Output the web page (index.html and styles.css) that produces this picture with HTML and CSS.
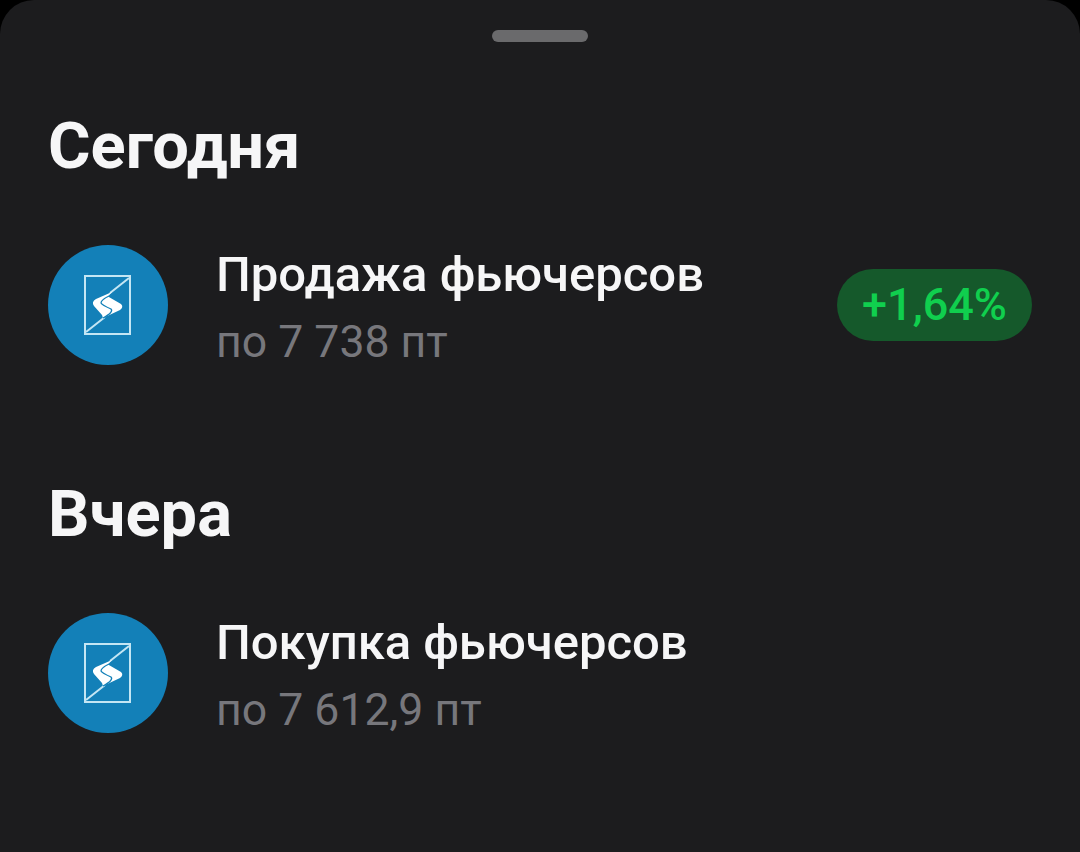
FILE: index.html
```html
<!DOCTYPE html>
<html lang="ru">
<head>
    <meta charset="UTF-8">
    <title>Операции</title>
    <link rel="stylesheet" href="styles.css">
</head>
<body>
    <div class="sheet">
        <div class="handle"></div>

        <section class="group group-today">
            <h2>Сегодня</h2>
            <div class="row">
                <svg class="logo" viewBox="0 0 120 120">
                    <circle cx="60" cy="60" r="60" fill="#1380b8"/>
                    <rect x="37" y="31" width="45" height="58" fill="none" stroke="#c4e6f4" stroke-width="2"/>
                    <path d="M38 87 L57 72 M62 48 L81 33" stroke="#c4e6f4" stroke-width="2"/>
                    <path d="M64 47 L48 54 Q43 57 46 61 L54 70 L55 73 L72 65 Q76 62 73 59 L60 51.5 Z" fill="#fff"/>
                    <path d="M61 51 Q53 55 53 58 Q54 60 63 64 Q66 67 55 73" fill="none" stroke="#1380b8" stroke-width="1.3"/>
                </svg>
                <div class="info">
                    <div class="title">Продажа фьючерсов</div>
                    <div class="sub">по 7 738 пт</div>
                </div>
                <div class="badge">+1,64%</div>
            </div>
        </section>

        <section class="group">
            <h2>Вчера</h2>
            <div class="row">
                <svg class="logo" viewBox="0 0 120 120">
                    <circle cx="60" cy="60" r="60" fill="#1380b8"/>
                    <rect x="37" y="31" width="45" height="58" fill="none" stroke="#c4e6f4" stroke-width="2"/>
                    <path d="M38 87 L57 72 M62 48 L81 33" stroke="#c4e6f4" stroke-width="2"/>
                    <path d="M64 47 L48 54 Q43 57 46 61 L54 70 L55 73 L72 65 Q76 62 73 59 L60 51.5 Z" fill="#fff"/>
                    <path d="M61 51 Q53 55 53 58 Q54 60 63 64 Q66 67 55 73" fill="none" stroke="#1380b8" stroke-width="1.3"/>
                </svg>
                <div class="info">
                    <div class="title">Покупка фьючерсов</div>
                    <div class="sub">по 7 612,9 пт</div>
                </div>
            </div>
        </section>
    </div>
</body>
</html>
```

FILE: styles.css
```css
html, body {
    margin: 0;
    padding: 0;
    height: 100%;
    background: #000;
}

body {
    font-family: Roboto, "Noto Sans", sans-serif;
    overflow: hidden;
}

.sheet {
    box-sizing: border-box;
    height: 852px;
    padding: 30px 48px 0;
    background: #1c1c1e;
    border-radius: 34px 34px 0 0;
}

.handle {
    width: 96px;
    height: 12px;
    margin: 0 auto;
    background: #6a6a6c;
    border-radius: 6px;
}

.group-today {
    margin-top: 69px;
    margin-bottom: 114px;
}

h2 {
    margin: 0 0 64px;
    font-size: 65px;
    line-height: 70px;
    font-weight: 700;
    color: #f6f6f7;
}

.row {
    display: flex;
    align-items: center;
    gap: 48px;
    height: 120px;
}

.logo {
    flex: none;
    width: 120px;
    height: 120px;
}

.info {
    flex: 1;
    padding-top: 4px;
}

.title {
    font-size: 49px;
    line-height: 64px;
    font-weight: 500;
    color: #f6f6f7;
}

.sub {
    margin-top: 5px;
    font-size: 44.6px;
    line-height: 60px;
    color: #77777c;
}

.badge {
    padding: 0 25px;
    height: 72px;
    line-height: 72px;
    font-size: 45px;
    font-weight: 500;
    color: #10cf4e;
    background: #15592b;
    border-radius: 36px;
}
```
